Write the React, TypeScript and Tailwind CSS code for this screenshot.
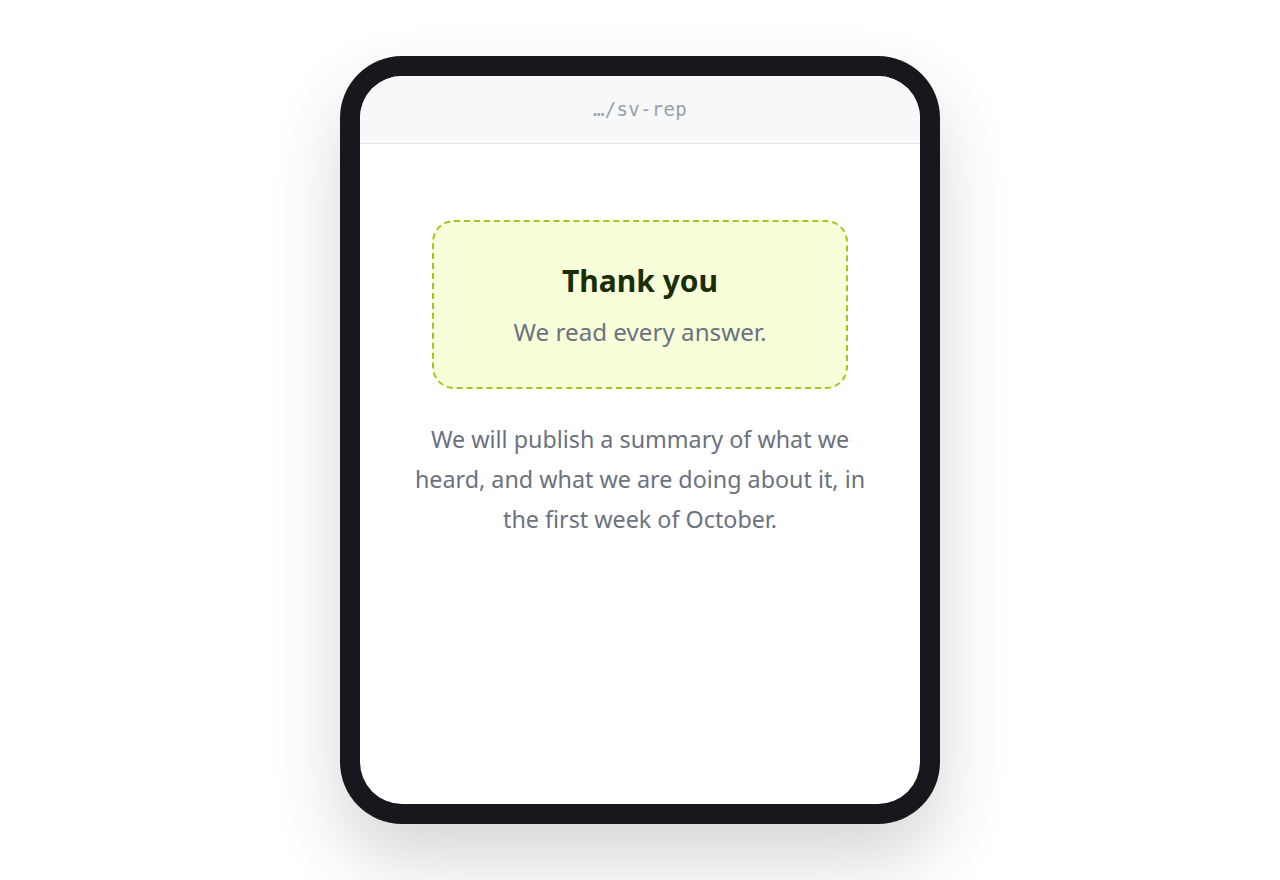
export default function App() {
  return (
    <div className="w-[1280px] h-[880px] bg-white flex justify-center" style={{ fontFamily: '"Noto Sans", "Open Sans", sans-serif' }}>
      <div className="mt-[56px] w-[600px] h-[768px] rounded-[62px] bg-[#16181d] p-[20px] shadow-[0_36px_70px_rgba(0,0,0,0.16)]">
        <div className="w-full h-full rounded-[42px] bg-white overflow-hidden flex flex-col">
          <div className="h-[68px] bg-[#f6f8fa] border-b border-[#e3e6ea] flex items-center justify-center">
            <span className="text-[19px] text-[#9aa0a8] tracking-[0.3px]" style={{ fontFamily: '"DejaVu Sans Mono", "Liberation Mono", monospace' }}>…/sv-rep</span>
          </div>
          <div className="flex flex-col items-center pt-[76px]">
            <div className="w-[416px] h-[169px] rounded-[22px] border-2 border-dashed border-[#a6c41c] bg-[#f8fed9] flex flex-col items-center pt-[39px]">
              <div className="text-[30px] leading-[40px] font-bold text-[#1a2e05]">Thank you</div>
              <div className="mt-[16px] text-[24.2px] leading-[30px] text-[#6b7280]">We read every answer.</div>
            </div>
            <p className="mt-[30px] w-[470px] text-center text-[23.3px] leading-[40px] text-[#6b7280]">
              We will publish a summary of what we heard, and what we are doing about it, in the first week of October.
            </p>
          </div>
        </div>
      </div>
    </div>
  );
}
